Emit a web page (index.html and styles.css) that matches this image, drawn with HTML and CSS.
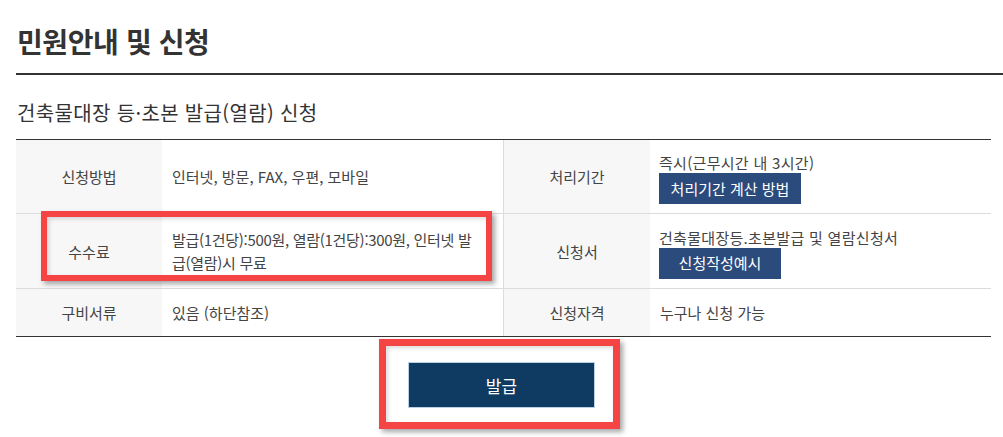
FILE: index.html
```html
<!DOCTYPE html>
<html lang="ko">
<head>
<meta charset="utf-8">
<title>민원안내 및 신청</title>
<link rel="stylesheet" href="styles.css">
</head>
<body>
<div class="page">
  <h1 class="title">민원안내 및 신청</h1>
  <h2 class="subtitle">건축물대장 등·초본 발급(열람) 신청</h2>
  <div class="info">
    <div class="grid">
      <div class="th">신청방법</div>
      <div class="td">인터넷, 방문, FAX, 우편, 모바일</div>
      <div class="th th-right">처리기간</div>
      <div class="td td-stack">
        <span class="line">즉시(근무시간 내 3시간)</span>
        <span class="btn-small btn-calc">처리기간 계산 방법</span>
      </div>

      <div class="th">수수료</div>
      <div class="td td-wrap"><span class="wrap">발급(1건당):500원, 열람(1건당):300원, 인터넷 발<br>급(열람)시 무료</span></div>
      <div class="th th-right">신청서</div>
      <div class="td td-stack">
        <span class="line">건축물대장등.초본발급 및 열람신청서</span>
        <span class="btn-small btn-example">신청작성예시</span>
      </div>

      <div class="th th-last">구비서류</div>
      <div class="td td-last">있음 (하단참조)</div>
      <div class="th th-right th-last">신청자격</div>
      <div class="td td-last">누구나 신청 가능</div>
    </div>
    <div class="mark mark-fee"></div>
  </div>
  <div class="actions">
    <div class="btn-holder">
      <span class="btn-issue">발급</span>
      <div class="mark mark-btn"></div>
    </div>
  </div>
</div>
</body>
</html>
```
FILE: styles.css
```css
html, body {
  margin: 0;
  padding: 0;
  background: #fff;
}
body {
  font-family: "Noto Sans CJK KR", "Noto Sans", sans-serif;
  color: #333;
}
.page {
  padding-left: 16px;
  padding-bottom: 30px;
}
.title {
  margin: 0;
  padding: 24px 0 15px 1px;
  font-size: 28px;
  line-height: 34px;
  font-weight: 700;
  color: #333;
  border-bottom: 2px solid #333;
  letter-spacing: -0.4px;
}
.subtitle {
  margin: 25px 0 13px 0;
  padding-left: 1px;
  font-size: 20px;
  line-height: 26px;
  font-weight: 400;
  color: #333;
  letter-spacing: 0.35px;
}
.info {
  position: relative;
  width: 975px;
}
.grid {
  display: grid;
  grid-template-columns: 146px 341px 147px 341px;
  grid-template-rows: 74px 75px 47px;
  border-top: 1px solid #333;
  border-bottom: 1px solid #333;
  font-size: 15px;
  color: #444;
}
.th, .td {
  box-sizing: border-box;
  border-bottom: 1px solid #dcdcdc;
  display: flex;
  align-items: center;
}
.th {
  background: #f7f7f7;
  justify-content: center;
}
.th-right {
  border-left: 1px solid #dcdcdc;
}
.th-last, .td-last {
  border-bottom: none;
}
.td {
  padding: 0 10px;
  line-height: 20px;
  white-space: nowrap;
}
.td-stack {
  flex-direction: column;
  align-items: flex-start;
  justify-content: center;
  padding-top: 4px;
  padding-left: 9px;
}
.line {
  display: block;
  line-height: 20px;
  letter-spacing: 0.3px;
}
.wrap {
  line-height: 23px;
  letter-spacing: -0.3px;
}
.btn-small {
  display: flex;
  align-items: center;
  justify-content: center;
  height: 31px;
  background: #2a4b7b;
  color: #fff;
  font-size: 15px;
}
.btn-calc {
  width: 142px;
}
.btn-example {
  width: 122px;
}
.mark {
  position: absolute;
  box-sizing: border-box;
  border: 6px solid #f54444;
  box-shadow: 3px 3px 5px rgba(0, 0, 0, 0.35), inset 2px 2px 4px rgba(0, 0, 0, 0.15);
}
.mark-fee {
  left: 25px;
  top: 72px;
  width: 451px;
  height: 70px;
}
.actions {
  width: 975px;
  box-sizing: border-box;
  padding-right: 4px;
  display: flex;
  justify-content: center;
}
.btn-holder {
  position: relative;
  margin-top: 25px;
}
.btn-issue {
  box-sizing: border-box;
  display: flex;
  align-items: center;
  justify-content: center;
  width: 187px;
  height: 46px;
  background: #0f3a62;
  border: 1px solid #b9d0e6;
  color: #fff;
  font-size: 17px;
}
.mark-btn {
  border-width: 7px;
  left: -29px;
  top: -23px;
  width: 241px;
  height: 90px;
}
```
